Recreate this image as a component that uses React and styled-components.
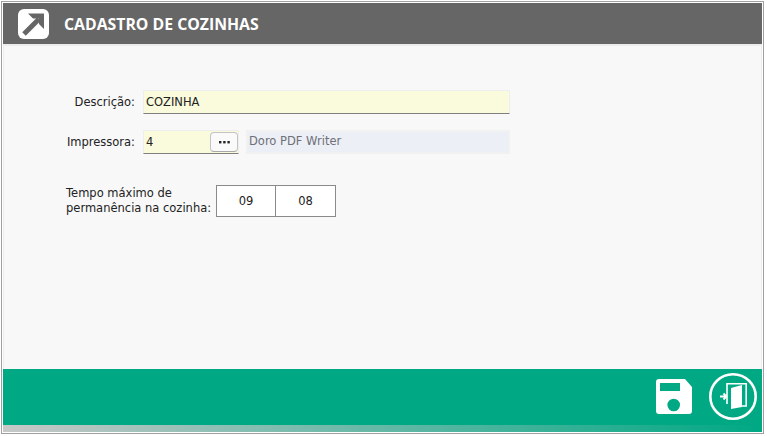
import React from 'react'
import styled, { createGlobalStyle } from 'styled-components'

const Global = createGlobalStyle`
  html, body { margin: 0; padding: 0; background: #fff; }
  body { font-family: "DejaVu Sans", "Noto Sans", sans-serif; }
`

function App() {
  return (
    <Frame>
      <Global />
      <TitleBar>
        <LogoIcon />
        <Title>CADASTRO DE COZINHAS</Title>
      </TitleBar>
      <Body>
        <Row>
          <Label>Descrição:</Label>
          <Input $width={367}>COZINHA</Input>
        </Row>
        <Row $top={16}>
          <Label>Impressora:</Label>
          <Input $width={96}>
            4
            <DotsButton>
              <DotsIcon />
            </DotsButton>
          </Input>
          <ReadOnly>Doro PDF Writer</ReadOnly>
        </Row>
        <Row $top={31}>
          <LongLabel>
            Tempo máximo de
            <br />
            permanência na cozinha:
          </LongLabel>
          <TimeBox>09</TimeBox>
          <TimeBox $joined>08</TimeBox>
        </Row>
      </Body>
      <Footer>
        <SaveIcon />
        <ExitIcon />
      </Footer>
      <Strip />
    </Frame>
  )
}

function LogoIcon() {
  return (
    <svg width="31" height="30" viewBox="0 0 31 30">
      <rect width="31" height="30" rx="6" fill="#fff" />
      <path d="M6 25 L21 10" stroke="#666" strokeWidth="5" fill="none" />
      <path d="M10 4.5 H26 V20 L21 15 V9.5 H15 Z" fill="#666" />
    </svg>
  )
}

function DotsIcon() {
  return (
    <svg width="11" height="3" viewBox="0 0 11 3">
      <rect x="0" width="2.4" height="2.4" fill="#222" />
      <rect x="4.2" width="2.4" height="2.4" fill="#222" />
      <rect x="8.4" width="2.4" height="2.4" fill="#222" />
    </svg>
  )
}

function SaveIcon() {
  return (
    <svg width="36" height="35" viewBox="0 0 36 35">
      <path
        fillRule="evenodd"
        fill="#fff"
        d="M3 0 H29 L36 8 V32 Q36 35 33 35 H3 Q0 35 0 32 V3 Q0 0 3 0 Z M4 4 V12 H24 V4 Z M17.7 19.7 A6.3 6.3 0 1 0 17.7 32.3 A6.3 6.3 0 1 0 17.7 19.7 Z"
      />
    </svg>
  )
}

function ExitIcon() {
  return (
    <svg width="48" height="47" viewBox="0 0 48 47">
      <ellipse cx="24" cy="23.5" rx="22.7" ry="22.2" fill="none" stroke="#fff" strokeWidth="2.6" />
      <path d="M18 31 V10.8 H37.2 V33 H33" fill="none" stroke="#fff" strokeWidth="1.6" />
      <path d="M22 15 L33 12 V34 L22 36 Z" fill="#fff" />
      <path d="M11 23.5 H17 M14.5 20.5 L17.5 23.5 L14.5 26.5" fill="none" stroke="#fff" strokeWidth="1.8" />
    </svg>
  )
}

const Frame = styled.div`
  box-sizing: border-box;
  width: 763px;
  height: 433px;
  margin: 1px 0 0 1px;
  padding: 1px;
  border: 1px solid #a0a0a0;
  display: flex;
  flex-direction: column;
  background: #fff;
`

const TitleBar = styled.div`
  height: 41px;
  flex: none;
  background: #666666;
  display: flex;
  align-items: center;
  padding-left: 15px;
  gap: 15px;
`

const Title = styled.div`
  font-family: "Open Sans", "Noto Sans", sans-serif;
  font-weight: 700;
  font-size: 15.8px;
  color: #fff;
`

const Body = styled.div`
  flex: 1;
  padding: 44px 0 0 62px;
  background: #f8f8f8;
  border: 1px solid #ececec;
  border-top-width: 2px;
  border-bottom: none;
`

const Row = styled.div`
  display: flex;
  align-items: center;
  margin-top: ${(p) => p.$top || 0}px;
`

const Label = styled.div`
  width: 69px;
  margin-right: 8px;
  text-align: right;
  white-space: nowrap;
  font-size: 11.5px;
  color: #222;
`

const LongLabel = styled.div`
  width: 150px;
  white-space: nowrap;
  font-size: 11.5px;
  line-height: 15px;
  color: #222;
`

const Input = styled.div`
  box-sizing: border-box;
  width: ${(p) => p.$width}px;
  height: 24px;
  display: flex;
  align-items: center;
  justify-content: space-between;
  padding: 0 0 0 2px;
  background: #fafadc;
  border: 1px solid #eeeeee;
  border-bottom: 1px solid #808080;
  font-size: 11.5px;
  color: #222;
`

const DotsButton = styled.div`
  box-sizing: border-box;
  width: 28px;
  height: 20px;
  display: flex;
  align-items: center;
  justify-content: center;
  background: #fafafa;
  border: 1px solid #c4c4c4;
  border-bottom-color: #a8a8a8;
  border-radius: 4px;
`

const ReadOnly = styled.div`
  box-sizing: border-box;
  width: 264px;
  height: 24px;
  margin-left: 7px;
  padding: 0 0 2px 1px;
  display: flex;
  align-items: center;
  background: #eceff5;
  border: 2px solid #f1f1f1;
  font-size: 11.5px;
  color: #6f6f78;
`

const TimeBox = styled.div`
  box-sizing: border-box;
  width: ${(p) => (p.$joined ? 61 : 60)}px;
  height: 32px;
  margin-left: ${(p) => (p.$joined ? -1 : 0)}px;
  display: flex;
  align-items: center;
  justify-content: center;
  background: #fff;
  border: 1px solid #8a8a8a;
  font-size: 11.5px;
  color: #222;
`

const Footer = styled.div`
  box-sizing: border-box;
  height: 56px;
  flex: none;
  background: #00a884;
  display: flex;
  align-items: center;
  justify-content: flex-end;
  gap: 17px;
  padding: 0 5px 2px 0;
`

const Strip = styled.div`
  height: 7px;
  flex: none;
  background: linear-gradient(to right, #c8c8c8, #00a884);
`

export default App
